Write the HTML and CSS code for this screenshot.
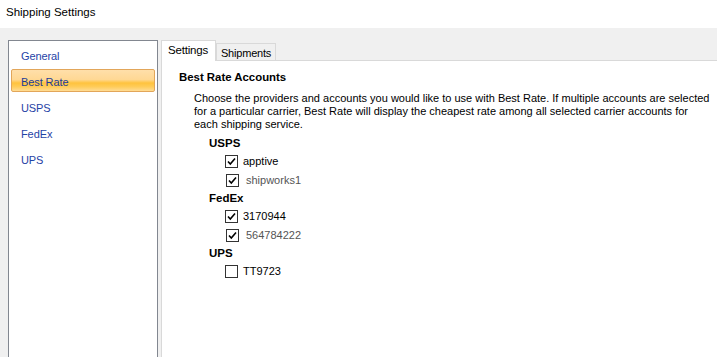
FILE: index.html
```html
<!DOCTYPE html>
<html>
<head>
<meta charset="utf-8">
<link rel="stylesheet" href="styles.css">
</head>
<body>
<div class="titlebar">Shipping Settings</div>
<div class="main">
  <div class="nav">
    <div class="nav-item">General</div>
    <div class="nav-item active">Best Rate</div>
    <div class="nav-item">USPS</div>
    <div class="nav-item">FedEx</div>
    <div class="nav-item">UPS</div>
  </div>
  <div class="tabs">
    <div class="tabstrip">
      <div class="tab selected">Settings</div>
      <div class="tab">Shipments</div>
    </div>
    <div class="page">
      <div class="heading">Best Rate Accounts</div>
      <p class="desc">Choose the providers and accounts you would like to use with Best Rate. If multiple accounts are selected<br>for a particular carrier, Best Rate will display the cheapest rate among all selected carrier accounts for<br>each shipping service.</p>
      <div class="group">
        <div class="group-label">USPS</div>
        <div class="row"><span class="cb"><svg width="11" height="11" viewBox="0 0 11 11"><path d="M2 5.5 L4.3 8 L9 2.5" fill="none" stroke="#000" stroke-width="1.6"/></svg></span><span class="acct">apptive</span></div>
        <div class="row alt"><span class="cb"><svg width="11" height="11" viewBox="0 0 11 11"><path d="M2 5.5 L4.3 8 L9 2.5" fill="none" stroke="#000" stroke-width="1.6"/></svg></span><span class="acct">shipworks1</span></div>
      </div>
      <div class="group">
        <div class="group-label">FedEx</div>
        <div class="row"><span class="cb"><svg width="11" height="11" viewBox="0 0 11 11"><path d="M2 5.5 L4.3 8 L9 2.5" fill="none" stroke="#000" stroke-width="1.6"/></svg></span><span class="acct">3170944</span></div>
        <div class="row alt"><span class="cb"><svg width="11" height="11" viewBox="0 0 11 11"><path d="M2 5.5 L4.3 8 L9 2.5" fill="none" stroke="#000" stroke-width="1.6"/></svg></span><span class="acct">564784222</span></div>
      </div>
      <div class="group">
        <div class="group-label">UPS</div>
        <div class="row"><span class="cb"></span><span class="acct">TT9723</span></div>
      </div>
    </div>
  </div>
</div>
</body>
</html>
```

FILE: styles.css
```css
html, body {
  margin: 0;
  padding: 0;
}
body {
  background: #f0f0f0;
  font-family: "Liberation Sans", Arial, sans-serif;
  color: #000;
  overflow: hidden;
  height: 357px;
}
.titlebar {
  background: #fff;
  height: 28px;
  box-sizing: border-box;
  padding: 4px 0 0 6px;
  font-size: 11.5px;
  line-height: 16px;
}
.main {
  display: flex;
  padding: 12px 0 0 8px;
  gap: 3px;
}
.nav {
  width: 150px;
  box-sizing: border-box;
  height: 317px;
  background: #fff;
  border: 1px solid #828790;
  border-bottom: none;
  padding: 2px 2px 0 2px;
}
.nav-item {
  height: 26px;
  box-sizing: border-box;
  padding: 6px 0 0 10px;
  font-size: 11px;
  line-height: 14px;
  letter-spacing: -0.1px;
  color: #1f43a6;
}
.nav-item.active {
  height: 23px;
  margin-bottom: 3px;
  padding-top: 5px;
  padding-left: 9px;
  border: 1px solid #e2a65a;
  border-radius: 2px;
  background: linear-gradient(to bottom, #ffdfaa 0%, #ffd894 45%, #ffc33d 62%, #ffcc5a 80%, #ffdc95 100%);
  color: #1c3c98;
}
.tabs {
  flex: 1;
  display: flex;
  flex-direction: column;
}
.tabstrip {
  display: flex;
  align-items: flex-end;
  height: 20px;
  border-bottom: 1px solid #d9d9d9;
}
.tab {
  height: 17px;
  box-sizing: border-box;
  border: 1px solid #d9d9d9;
  border-bottom: none;
  background: #f0f0f0;
  font-size: 11px;
  letter-spacing: -0.2px;
  line-height: 15px;
  padding: 2px 4px 0 4px;
}
.tab.selected {
  height: 21px;
  margin-bottom: -1px;
  background: #fff;
  padding: 2px 7px 0 6px;
  font-size: 11.5px;
  letter-spacing: -0.2px;
}
.page {
  background: #fff;
  border-left: 1px solid #d9d9d9;
  height: 296px;
  padding: 9px 0 0 17px;
  box-sizing: border-box;
}
.heading {
  font-weight: bold;
  font-size: 11.4px;
  line-height: 15px;
}
.desc {
  margin: 7px 0 0 15px;
  font-size: 11px;
  line-height: 13px;
  white-space: nowrap;
}
.group {
  margin: 6px 0 0 30px;
}
.group + .group {
  margin-top: 3px;
}
.group-label {
  font-weight: bold;
  font-size: 11.5px;
  line-height: 13px;
}
.row {
  display: flex;
  align-items: center;
  height: 18px;
  margin-top: 1px;
  padding-left: 16px;
  font-size: 11px;
}
.group-label + .row {
  margin-top: 2px;
}
.cb {
  width: 13px;
  height: 13px;
  box-sizing: border-box;
  border: 1px solid #333;
  background: #fff;
  display: flex;
  align-items: center;
  justify-content: center;
}
.acct {
  margin-left: 5px;
}
.row.alt {
  padding-left: 17px;
  color: #555;
}
.row.alt .acct {
  margin-left: 7px;
}
```
